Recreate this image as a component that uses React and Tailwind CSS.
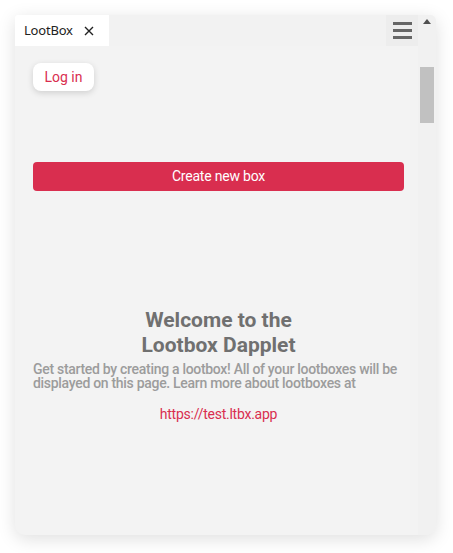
import React from 'react';

const RED = 'text-[#d92e4f]';

const Hamburger = () => (
  <div className="flex w-[32px] flex-col items-center justify-center gap-[4px] bg-[#ededed]">
    <span className="block h-[3px] w-[19px] bg-[#666666]" />
    <span className="block h-[3px] w-[19px] bg-[#666666]" />
    <span className="block h-[3px] w-[19px] bg-[#666666]" />
  </div>
);

const Scrollbar = () => (
  <div className="flex w-[18px] flex-col items-center bg-[#f1f1f1]">
    <svg width="8" height="5" viewBox="0 0 8 5" className="mt-[4px]">
      <path d="M0 5 L4 0 L8 5 Z" fill="#505050" />
    </svg>
    <div className="mt-[43px] h-[56px] w-[14px] bg-[#c1c1c1]" />
  </div>
);

const App = () => {
  return (
    <div className="h-[553px] w-[453px] bg-white pt-[15px] pl-[15px]">
      <div
        className="flex h-[520px] w-[421px] overflow-hidden rounded-b-[10px] rounded-tr-[6px] rounded-tl-[2px] bg-[#f3f3f3] shadow-[0_4px_18px_rgba(0,0,0,0.13)]"
        style={{ fontFamily: 'Roboto, "Liberation Sans", sans-serif' }}
      >
        <div className="flex flex-1 flex-col">
          <div className="flex h-[31px] bg-[#f2f2f2]">
            <div
              className="flex w-[94px] items-center bg-white pl-[9px] text-[13px] tracking-[-0.2px] text-[#222]"
              style={{ fontFamily: '"Noto Sans", "Open Sans", sans-serif' }}
            >
              <span>LootBox</span>
              <svg width="10" height="10" viewBox="0 0 10 10" className="ml-[11px]">
                <path d="M1 1 L9 9 M9 1 L1 9" stroke="#222" strokeWidth="1.4" />
              </svg>
            </div>
            <div className="flex-1" />
            <Hamburger />
          </div>

          <div className="flex flex-col pl-[18px] pr-[14px] pt-[17px]">
            <button className={`h-[28px] w-[61px] rounded-[8px] bg-white text-[14px] ${RED} shadow-[0_2px_6px_rgba(0,0,0,0.15)]`}>
              Log in
            </button>

            <button className="mt-[71px] h-[29px] w-full rounded-[4px] bg-[#d92e4f] text-[14px] tracking-[-0.2px] text-white">
              Create new box
            </button>

            <h1 className="mx-auto mt-[117px] w-[210px] text-center text-[21px] font-bold leading-[25px] text-[#707070]">
              Welcome to the Lootbox Dapplet
            </h1>
            <p className="mt-[4px] text-[14px] font-medium leading-[14px] tracking-[-0.3px] text-[#9c9c9c]">
              Get started by creating a lootbox! All of your lootboxes will be displayed on this page. Learn more about lootboxes at
            </p>
            <a className={`mt-[14px] text-center text-[14px] tracking-[-0.25px] ${RED}`}>https://test.ltbx.app</a>
          </div>
        </div>
        <Scrollbar />
      </div>
    </div>
  );
};

export default App;
